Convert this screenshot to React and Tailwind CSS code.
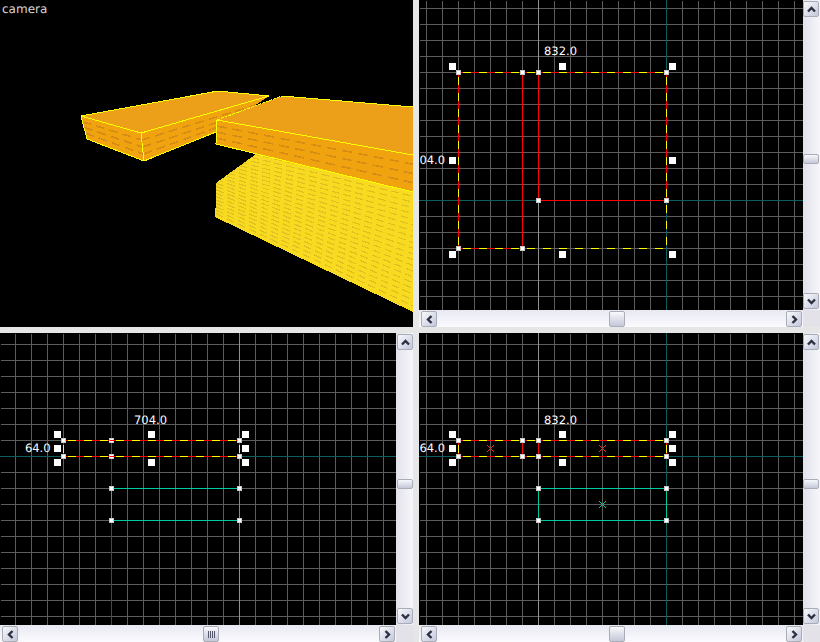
import React from "react";

const lerp = (a, b, t) => [a[0] + (b[0] - a[0]) * t, a[1] + (b[1] - a[1]) * t];

// dashed courses of bricks on a side face, a-b is the top edge and c-d the bottom edge
function Courses({ a, b, c, d, n, color, fill, dash = "9 5" }) {
  const rows = [];
  for (let i = 1; i < n; i++) {
    const p = lerp(a, c, i / n);
    const q = lerp(b, d, i / n);
    rows.push(
      <line key={i} x1={p[0]} y1={p[1]} x2={q[0]} y2={q[1]} stroke={color} strokeWidth="1.6" strokeDasharray={dash} />
    );
  }
  return (
    <>
      <polygon points={[a, b, d, c].join(" ")} fill={fill} />
      {rows}
    </>
  );
}

const yellowRows = Array.from({ length: 22 }, (_, i) => i + 1);

function CameraScene() {
  return (
    <svg width="413" height="327" className="block bg-black" shapeRendering="crispEdges">
      <defs>
        <clipPath id="yellow-block">
          <polygon points="256,154 216,183 216,200 215,217 413,312 413,192" />
        </clipPath>
      </defs>
      <text x="2" y="13" fill="#d8d8d8" fontSize="12" fontFamily="DejaVu Sans, sans-serif" textRendering="geometricPrecision">camera</text>

      {/* yellow block */}
      <polygon points="256,154 216,183 216,200 215,217 413,312 413,192" fill="#f8da20" />
      <g clipPath="url(#yellow-block)" stroke="#e0c020" strokeWidth="1.2" strokeDasharray="8 4">
        {yellowRows.map((i) => (
          <line key={i} x1="216" y1={217 - 3.4 * i} x2="413" y2={217 - 3.4 * i + 197 * (0.48 - 0.012 * i)} />
        ))}
      </g>

      {/* left block */}
      <polygon points="81,116 218,91 269,96 141,133" fill="#ec9f18" />
      <Courses a={[81, 116]} b={[141, 133]} c={[87, 139]} d={[144, 161]} n={4} color="#d48c14" fill="#f0a20f" />
      <Courses a={[141, 133]} b={[269, 96]} c={[144, 161]} d={[216, 132]} n={4} color="#d48c14" fill="#f0a20f" />
      <polyline points="87,139 144,161 216,132" fill="none" stroke="#ffff00" />
      <polygon points="81,116 218,91 269,96 141,133" fill="none" stroke="#ffff00" />
      <polyline points="81,116 87,139" fill="none" stroke="#ffff00" />
      <polyline points="141,133 144,161" fill="none" stroke="#ffff00" />

      {/* right block */}
      <polygon points="217,120 282,96 413,107 413,155" fill="#ec9f18" />
      <Courses a={[217, 120]} b={[413, 155]} c={[216, 144]} d={[413, 192]} n={4} color="#d48c14" fill="#f0a20f" dash="10 6" />
      <polyline points="217,120 282,96" fill="none" stroke="#ffff00" strokeDasharray="3 1" />
      <polyline points="282,96 413,107" fill="none" stroke="#ffff00" />
      <polyline points="217,120 413,155" fill="none" stroke="#ffff00" />
      <polyline points="217,120 216,144 413,192" fill="none" stroke="#ffff00" />
    </svg>
  );
}

// ortho grid with the two axis lines, everything is in window pixels relative to the viewport
function Ortho({ width, height, originX, originY, firstX, firstY, axisX, axisY, brightX, children }) {
  const vs = [];
  for (let x = firstX; x < originX + width; x += 16) vs.push(x);
  const hs = [];
  for (let y = firstY; y < originY + height; y += 16) hs.push(y);
  return (
    <svg
      width={width}
      height={height}
      viewBox={`${originX} ${originY} ${width} ${height}`}
      className="block bg-black"
      shapeRendering="crispEdges"
    >
      {vs.map((x) => (
        <line key={x} x1={x + 0.5} y1={originY + 1} x2={x + 0.5} y2={originY + height} stroke="#5c5c5c" />
      ))}
      {hs.map((y) => (
        <line key={y} x1={originX + 1} y1={y + 0.5} x2={originX + width} y2={y + 0.5} stroke="#5c5c5c" />
      ))}
      {brightX && <line x1={brightX + 0.5} y1={originY} x2={brightX + 0.5} y2={originY + height} stroke="#909090" />}
      <line x1={axisX + 0.5} y1={originY} x2={axisX + 0.5} y2={originY + height} stroke="#0f5f5f" />
      <line x1={originX} y1={axisY + 0.5} x2={originX + width} y2={axisY + 0.5} stroke="#0f5f5f" />
      {children}
    </svg>
  );
}

function Red({ x1, y1, x2, y2 }) {
  return <line x1={x1 + 0.5} y1={y1 + 0.5} x2={x2 + 0.5} y2={y2 + 0.5} stroke="#ff0000" />;
}

// yellow dashes start 4px after the brush corner
function Yellow({ x1, y1, x2, y2 }) {
  return <line x1={x1 + 0.5} y1={y1 + 0.5} x2={x2 + 0.5} y2={y2 + 0.5} stroke="#ffff00" strokeDasharray="8 8" strokeDashoffset="-4" />;
}

function DashLine(props) {
  return (
    <>
      <Red {...props} />
      <Yellow {...props} />
    </>
  );
}

function Teal({ x1, y1, x2, y2 }) {
  return <line x1={x1 + 0.5} y1={y1 + 0.5} x2={x2 + 0.5} y2={y2 + 0.5} stroke="#00c8a0" />;
}

function Handles({ big = [], small = [] }) {
  return (
    <>
      {big.map(([x, y]) => (
        <rect key={`b${x}-${y}`} x={x - 3} y={y - 3} width="7" height="7" fill="#fff" />
      ))}
      {small.map(([x, y]) => (
        <g key={`s${x}-${y}`}>
          <rect x={x - 2} y={y - 2} width="5" height="5" fill="#c8c8c8" />
          <rect x={x - 1} y={y - 1} width="3" height="3" fill="#fff" />
        </g>
      ))}
    </>
  );
}

function Label({ x, y, anchor = "middle", children }) {
  return (
    <text x={x} y={y} fill="#fff" fontSize="11.5" textAnchor={anchor} fontFamily="DejaVu Sans, sans-serif" textRendering="geometricPrecision">
      {children}
    </text>
  );
}

function Cross({ x, y, color }) {
  return (
    <path d={`M${x - 3} ${y - 3}L${x + 4} ${y + 4}M${x + 4} ${y - 3}L${x - 3} ${y + 4}`} stroke={color} fill="none" shapeRendering="auto" />
  );
}

function Chevron({ dir }) {
  const rot = { up: "rotate-180", down: "", left: "rotate-90", right: "-rotate-90" }[dir];
  return (
    <svg width="9" height="7" viewBox="0 0 9 7" className={rot}>
      <path d="M1 1.5L4.5 5L8 1.5" fill="none" stroke="#2c3040" strokeWidth="2.4" />
    </svg>
  );
}

function ScrollButton({ dir }) {
  return (
    <div className="w-[16px] h-[16px] shrink-0 flex items-center justify-center rounded-[2px] border border-[#a9adb8] bg-gradient-to-br from-[#f8f9fc] to-[#c4c8dc]">
      <Chevron dir={dir} />
    </div>
  );
}

function Thumb({ vertical, grip }) {
  return (
    <div
      className={`flex items-center justify-center rounded-[2px] border border-[#a9adb8] bg-gradient-to-b from-[#f8f9fc] to-[#c4c8d8] ${
        vertical ? "w-[16px] h-[10px]" : "w-[16px] h-[16px]"
      }`}
    >
      {grip ? (
        <div className="flex gap-[1px]">
          <div className="w-[1px] h-[7px] bg-[#55586a]" />
          <div className="w-[1px] h-[7px] bg-[#55586a]" />
          <div className="w-[1px] h-[7px] bg-[#55586a]" />
          <div className="w-[1px] h-[7px] bg-[#55586a]" />
        </div>
      ) : null}
    </div>
  );
}

function VScroll({ thumbTop, alignEnd }) {
  return (
    <div className={`w-[17px] py-[1px] flex flex-col bg-gradient-to-r from-[#e2e2ea] to-[#f6f6fb] ${alignEnd ? "items-end" : "items-start"}`}>
      <ScrollButton dir="up" />
      <div className="flex-1">
        <div style={{ height: thumbTop }} />
        <Thumb vertical />
      </div>
      <ScrollButton dir="down" />
    </div>
  );
}

function HScroll({ thumbLeft, grip }) {
  return (
    <div className="h-[17px] pl-[2px] pr-[1px] flex items-end bg-gradient-to-b from-[#e8e8f2] to-[#fbfbfe]">
      <ScrollButton dir="left" />
      <div className="flex-1 flex items-end">
        <div className="shrink-0" style={{ width: thumbLeft }} />
        <Thumb grip={grip} />
      </div>
      <ScrollButton dir="right" />
    </div>
  );
}

function Pane({ width, height, thumbTop, thumbLeft, grip, alignEnd, children }) {
  return (
    <div className="grid" style={{ gridTemplateColumns: `${width}px 17px`, gridTemplateRows: `${height}px 17px` }}>
      <div className="overflow-hidden">{children}</div>
      <VScroll thumbTop={thumbTop} alignEnd={alignEnd} />
      <HScroll thumbLeft={thumbLeft} grip={grip} />
      <div className="bg-[#e2e2e8]" />
    </div>
  );
}

export default function App() {
  return (
    <div className="w-[820px] h-[642px] overflow-hidden grid grid-cols-[413px_401px] grid-rows-[327px_309px] gap-x-[6px] gap-y-[6px] bg-[#e6e6e6]">
      <CameraScene />

      <Pane width={384} height={310} thumbTop={137} thumbLeft={172}>
        <Ortho width={384} height={310} originX={419} originY={0} firstX={426} firstY={8} axisX={666} axisY={200} brightX={538}>
          <DashLine x1={458} y1={72} x2={666} y2={72} />
          <DashLine x1={458} y1={72} x2={458} y2={248} />
          <Red x1={458} y1={248} x2={522} y2={248} />
          <Yellow x1={458} y1={248} x2={666} y2={248} />
          <Red x1={666} y1={72} x2={666} y2={200} />
          <Yellow x1={666} y1={72} x2={666} y2={248} />
          <Red x1={522} y1={72} x2={522} y2={248} />
          <Red x1={538} y1={72} x2={538} y2={200} />
          <Red x1={538} y1={200} x2={666} y2={200} />
          <Handles
            big={[[452, 66], [562, 66], [672, 66], [452, 160], [672, 160], [452, 254], [562, 254], [672, 254]]}
            small={[[458, 72], [522, 72], [538, 72], [666, 72], [458, 248], [522, 248], [538, 200], [666, 200]]}
          />
          <Label x={560.5} y={55}>832.0</Label>
          <Label x={445} y={164} anchor="end">04.0</Label>
        </Ortho>
      </Pane>

      <Pane width={396} height={292} thumbTop={129} thumbLeft={185} grip alignEnd>
        <Ortho width={396} height={292} originX={0} originY={333} firstX={15} firstY={344} axisX={111} axisY={456} brightX={239}>
          <DashLine x1={63} y1={440} x2={239} y2={440} />
          <DashLine x1={63} y1={456} x2={239} y2={456} />
          <DashLine x1={63} y1={440} x2={63} y2={456} />
          <DashLine x1={239} y1={440} x2={239} y2={456} />
          <Red x1={111} y1={440} x2={111} y2={456} />
          <Teal x1={111} y1={488} x2={239} y2={488} />
          <Teal x1={111} y1={520} x2={239} y2={520} />
          <Teal x1={111} y1={488} x2={111} y2={520} />
          <Teal x1={239} y1={488} x2={239} y2={520} />
          <Handles
            big={[[57, 434], [151, 434], [245, 434], [57, 448], [245, 448], [57, 462], [151, 462], [245, 462]]}
            small={[[63, 440], [111, 440], [239, 440], [63, 456], [111, 456], [239, 456], [111, 488], [239, 488], [111, 520], [239, 520]]}
          />
          {/* the two brushes touch here so their edge runs through the handles */}
          <Red x1={109} y1={440} x2={113} y2={440} />
          <Red x1={109} y1={456} x2={113} y2={456} />
          <Label x={150.5} y={424}>704.0</Label>
          <Label x={50.5} y={452} anchor="end">64.0</Label>
        </Ortho>
      </Pane>

      <Pane width={384} height={292} thumbTop={129} thumbLeft={172}>
        <Ortho width={384} height={292} originX={419} originY={333} firstX={426} firstY={344} axisX={666} axisY={456} brightX={538}>
          <DashLine x1={458} y1={440} x2={666} y2={440} />
          <DashLine x1={458} y1={456} x2={666} y2={456} />
          <DashLine x1={458} y1={440} x2={458} y2={456} />
          <DashLine x1={666} y1={440} x2={666} y2={456} />
          <Red x1={522} y1={440} x2={522} y2={456} />
          <Red x1={538} y1={440} x2={538} y2={456} />
          <Teal x1={538} y1={488} x2={666} y2={488} />
          <Teal x1={538} y1={520} x2={666} y2={520} />
          <Teal x1={538} y1={488} x2={538} y2={520} />
          <Teal x1={666} y1={488} x2={666} y2={520} />
          <Cross x={490} y={448} color="#ff2020" />
          <Cross x={602} y={448} color="#ff2020" />
          <Cross x={602} y={504} color="#00c8a0" />
          <Handles
            big={[[452, 434], [562, 434], [672, 434], [452, 448], [672, 448], [452, 462], [562, 462], [672, 462]]}
            small={[[458, 440], [522, 440], [538, 440], [666, 440], [458, 456], [522, 456], [538, 456], [666, 456], [538, 488], [666, 488], [538, 520], [666, 520]]}
          />
          <Label x={560.5} y={424}>832.0</Label>
          <Label x={445} y={452} anchor="end">64.0</Label>
        </Ortho>
      </Pane>
    </div>
  );
}
